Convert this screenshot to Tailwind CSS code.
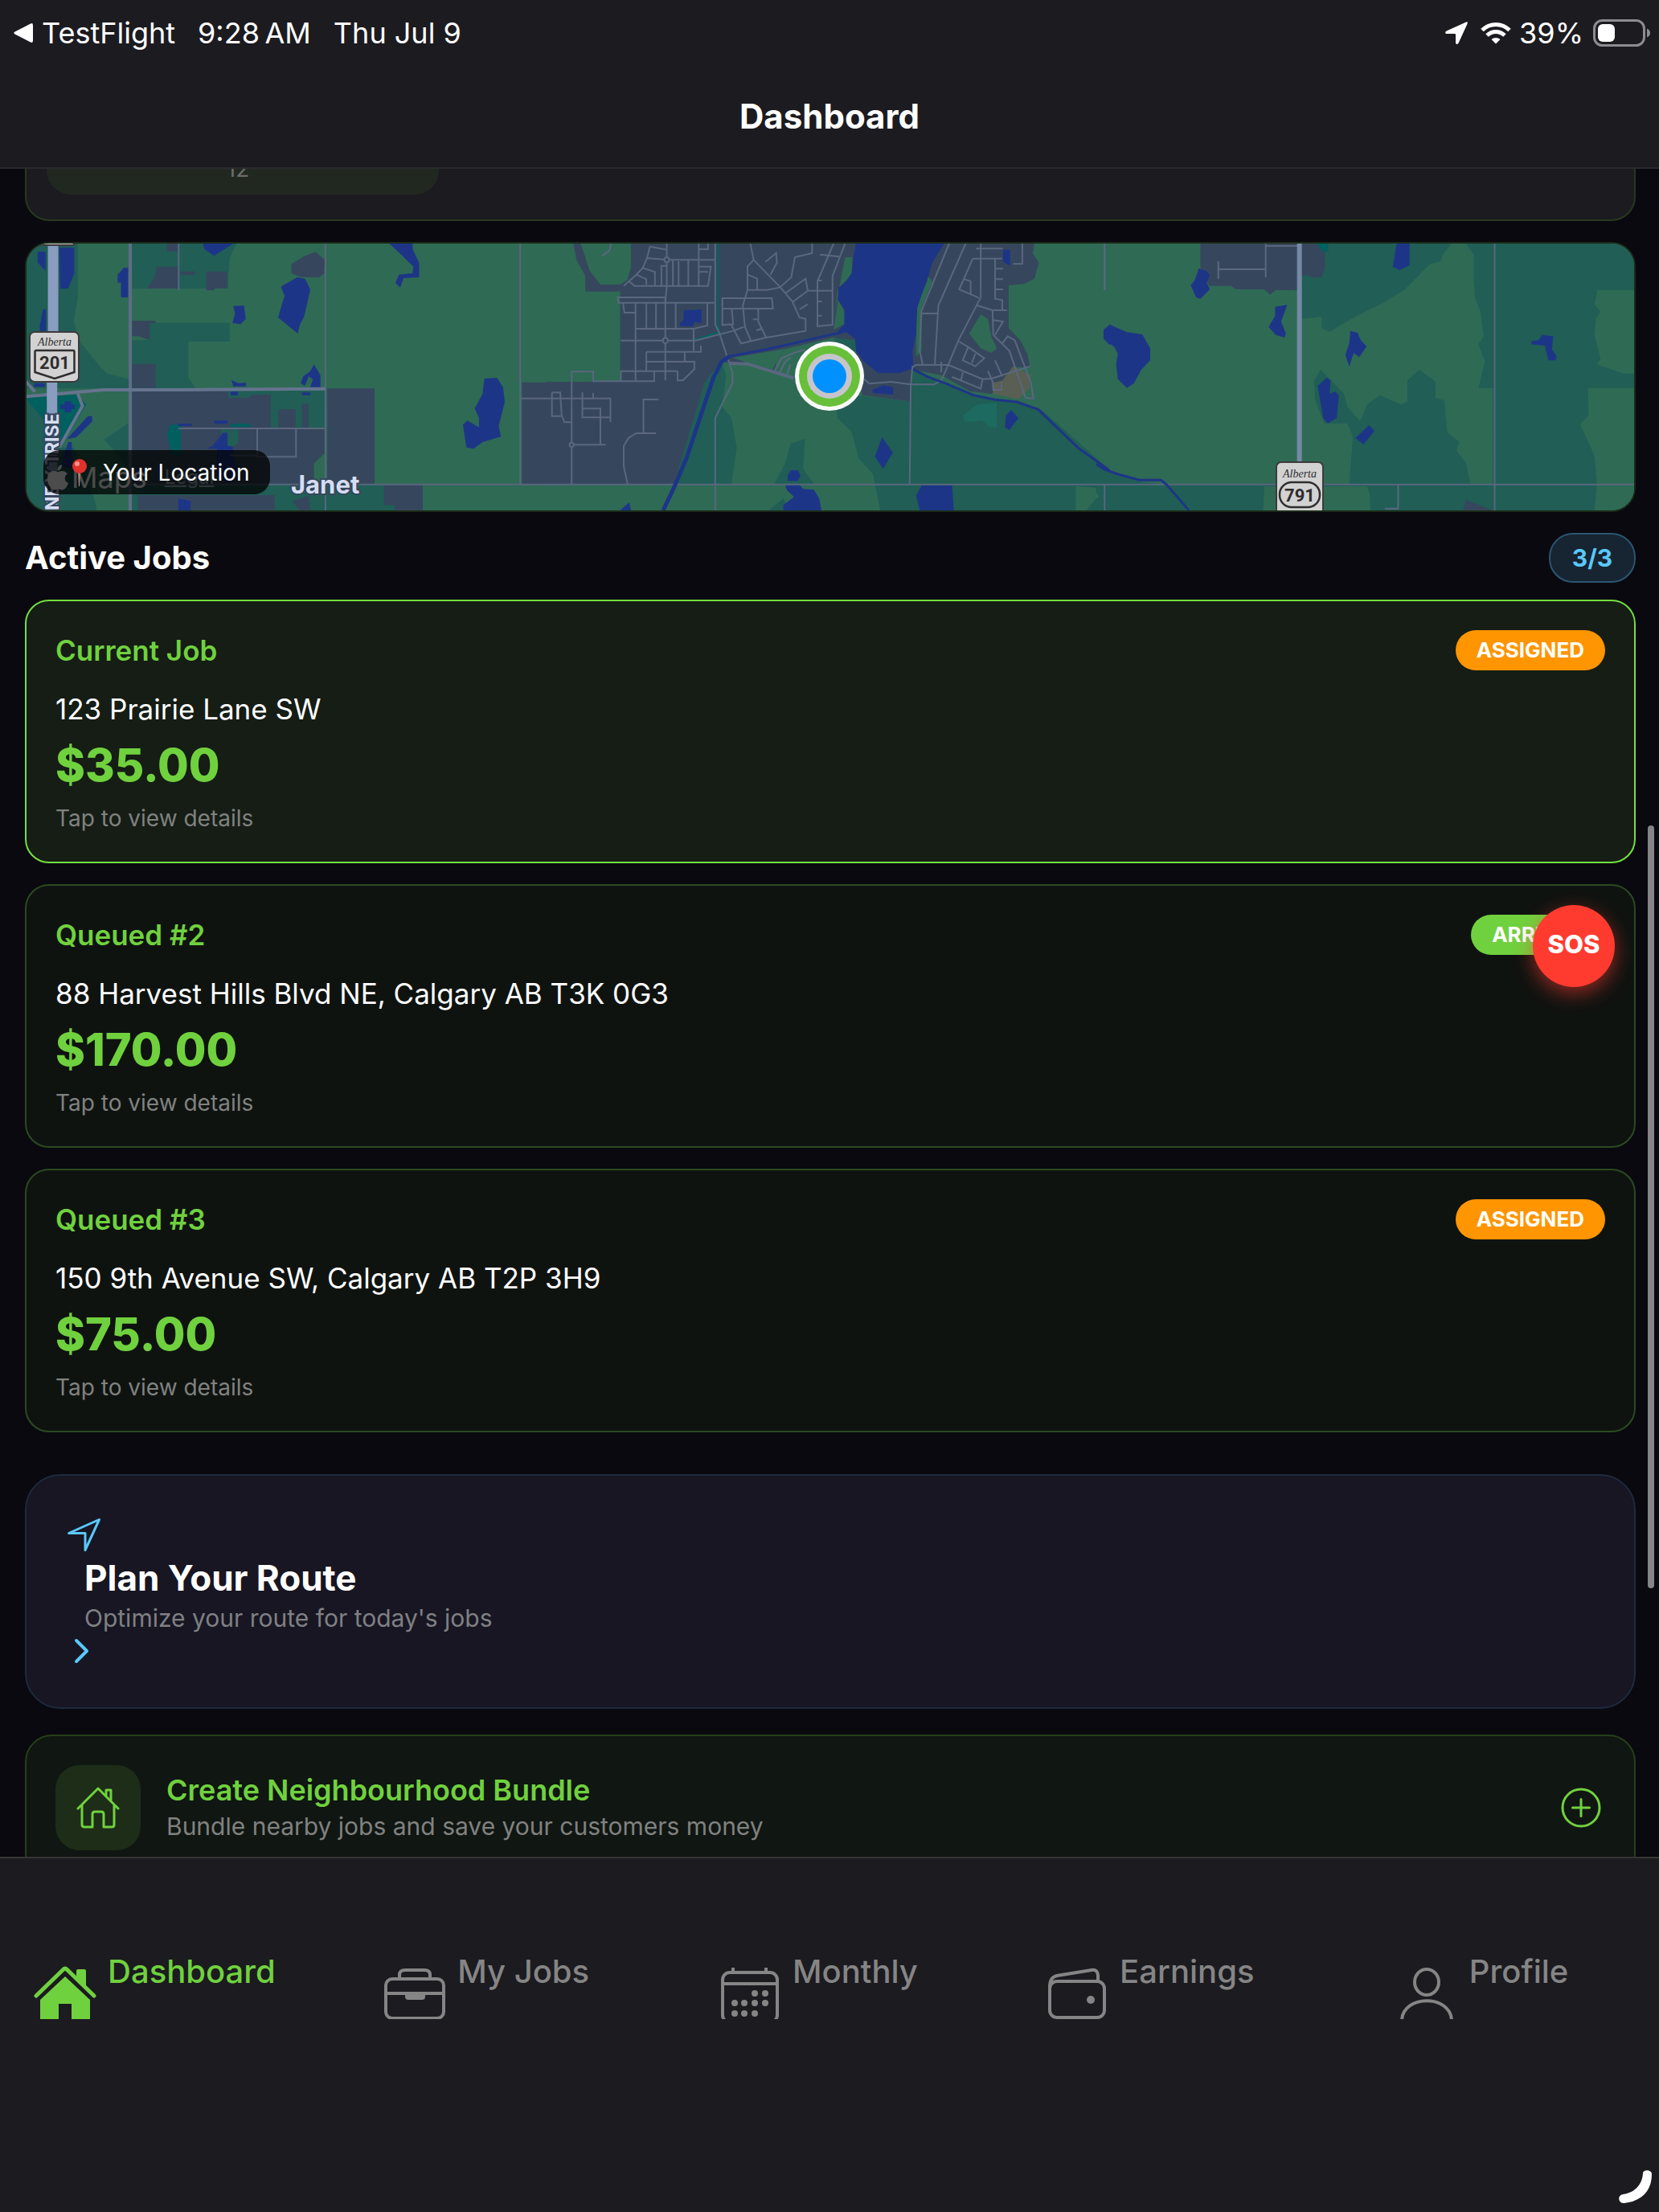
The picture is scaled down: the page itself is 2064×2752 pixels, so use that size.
<!DOCTYPE html>
<html lang="en">
<head>
  <meta charset="UTF-8"/>
  <meta name="viewport" content="width=device-width, initial-scale=1.0"/>
  <title>Dashboard</title>
  <script src="https://cdn.jsdelivr.net/npm/@tailwindcss/browser@4"></script>
</head>
<body class="bg-[#0a090f] text-white font-['Inter','Liberation_Sans',sans-serif]">
  <div class="relative flex flex-col h-screen overflow-hidden">

    <!-- Header -->
    <header class="shrink-0 bg-[#1c1b20] border-b-2 border-[#2b2a2f]">
      <div class="flex items-center justify-between h-[82px] pl-4 pr-[10px] text-[36px] leading-[44px]">
        <div class="flex items-center">
          <svg class="w-[26px] h-[26px] mr-[10px]" viewBox="0 0 26 26" fill="#fff"><path d="M2.500 11.500 22 1.500Q25 0 25 3.500V22.500Q25 26 22 24.500L2.500 14.500Q0 13 2.500 11.500Z"/></svg>
          <span class="mr-7">TestFlight</span>
          <span class="mr-7">9:28&#8201;AM</span>
          <span>Thu Jul 9</span>
        </div>
        <div class="flex items-center">
          <svg class="w-7 h-7 mr-4" viewBox="0 0 28 28" fill="#fff"><path d="M26 .4 1.600 11.400C-.6 12.600 0 15 2 15H12Q13 15 13 16V26C13 28.400 15.600 28.600 16.600 26.600L27.600 2.400C28.200 1 27.400 0 26 .4Z"/></svg>
          <svg class="w-[38px] h-[28px] mr-[10px]" viewBox="0 0 38 28" fill="none" stroke="#fff" stroke-width="5"><path d="M2 10.500C11.500 1 26.500 1 36 10.500"/><path d="M8 17C14.500 11 23.500 11 30 17"/><path d="M19 27.500 13.500 22C16.500 19.300 21.500 19.300 24.500 22Z" fill="#fff" stroke="none"/></svg>
          <span class="mr-3">39%</span>
          <svg class="w-[72px] h-[34px]" viewBox="0 0 72 34"><rect x="1.500" y="1.500" width="62" height="31" rx="10" fill="none" stroke="#8d8d90" stroke-width="3"/><rect x="6" y="6" width="21" height="22" rx="6" fill="#fff"/><path d="M67 11.500Q71 13 71 17T67 22.500Z" fill="#8d8d90"/></svg>
        </div>
      </div>
      <h1 class="h-[126px] text-center text-[42px] leading-[126px] font-bold">Dashboard</h1>
    </header>

    <!-- Scrolling content -->
    <main class="flex-1 min-h-0 overflow-hidden pl-[31px] pr-[29px]">

      <!-- Bottom of the stats card -->
      <section class="h-[65px] rounded-b-[30px] border-2 border-t-0 border-[#28381f] bg-[#1c1b20] px-[25px] overflow-hidden">
        <div class="w-[488px] h-8 rounded-b-[30px] bg-[#212820] text-center text-[28px] text-[#6c6c6c] leading-[0px] pr-3 overflow-hidden">
          <span>12</span>
        </div>
      </section>

      <!-- Map -->
      <section class="relative mt-[26px] h-[336px] rounded-[30px] border-2 border-[#1b2a17] bg-[#2f6a55] overflow-hidden">
        <svg class="block w-full h-full" viewBox="0 0 2000 332" preserveAspectRatio="xMidYMid slice">
          <rect width="2000" height="332" fill="#2f6a55"/>

          <!-- West -->
          <g transform="translate(-33 -13) scale(.4464 .3333)">
            <path fill="#205e56" d="M73 39H217V240L205 330 225 410 280 500 300 525 360 545V580H73ZM368 39H660L640 90 635 207H368ZM417 335H640V405H525V540L545 578H368V400H417ZM637 588H906V727H637ZM73 605H130V1035H73ZM165 800H205L230 880 265 1000 270 1035H165ZM290 770 357 710V880L330 830ZM368 938H1178V1035H368Z"/>
            <path fill="#36475d" d="M465 39h30v30h-30ZM437 125H498V207H410L430 165ZM502 143h42v14h-42ZM575 143H633V207H597V214H575ZM880 70 905 100 903 150 890 165H840L812 150V115L850 85ZM368 327H433V337H417V400L385 385H368ZM368 488h66v90h-66ZM368 588H637V615H690L705 603H755V727H906V820L875 860V925H906V938H368ZM912 580h132v358h-132ZM1070 940h108v95h-78V1015h-30ZM385 978h380v57h-380ZM776 657h48v70h-48ZM842 637h18v90h-18ZM815 1000 860 980 865 1035H835ZM1455 557H1572V938H1455Z"/>
            <path fill="#005f5f" d="M73 615 215 603 240 640 170 800 125 780V700L73 620ZM475 715H504V830H480L465 750ZM643 712h54v12h-54Z"/>
            <path fill="#205e56" d="M617 733h47v50l-20 20h-27Z"/>
            <path fill="#1d3587" d="M105 70h22v70l-22-30ZM165 55H207V150L190 207H168ZM345 130h12v110h-20v-55h-9v-30ZM120 285h8v80h-17v-20ZM565 39H650L597 85 570 60ZM828 165 850 170 865 210 848 310 835 345 830 375 775 315 785 270 793 235 783 200ZM650 272 680 270 685 320 670 340 648 335 655 300ZM1085 39H1150V60L1168 110V165L1125 168 1115 203 1102 185 1112 155 1150 150 1152 125 1110 70ZM875 490 893 530V575H865L872 545 860 535 850 570 838 560 845 535 865 515ZM645 548 665 560 685 558V572H650ZM643 592h20v14h-20ZM842 595h23v10h-23ZM1350 543 1385 540 1402 575 1407 630 1390 720 1396 760 1345 780 1320 805 1300 800 1290 715 1303 700 1335 725V690L1323 655 1345 600ZM180 628h18v12h10v16h-10v12h-18v-12h-12v-16h12ZM245 683h12v20l-45 60-25 5ZM497 712h38v8h-38ZM597 700h37v12h-37ZM622 745h12v50h14l15 125-30 10-28-30V805h-30l17-10ZM497 990 532 1000 530 1035H497ZM190 780h10v100l-30-10ZM95 560h30v14h-30Z"/>
            <path vector-effect="non-scaling-stroke" fill="none" stroke="#5a677f" stroke-width="2" d="M498 39V212M907 39V1035M1450 39V938M497 729H906M717 729V835H825V729M640 830H717M906 938H1572M368 938H906M1453 617H1535M1568 595H1540L1536 605V685H1568"/>
            <path vector-effect="non-scaling-stroke" fill="none" stroke="#5f6d87" stroke-width="4" d="M363 39V1035"/>
            <path vector-effect="non-scaling-stroke" fill="none" stroke="#66748f" stroke-width="4" d="M73 610 290 585H500L907 581M73 555 97 592M217 600 230 645 165 800"/>
            <path vector-effect="non-scaling-stroke" fill="none" stroke="#8a9cc0" stroke-width="13" d="M148 39V370L145 560V1035"/>
          </g>

          <!-- Town -->
          <g transform="translate(647 -13) scale(.4464 .3333)">
            <path fill="#205e56" d="M485 470 500 530 490 650 515 690 530 800 515 938H355L440 560ZM862 605 1010 628 1015 500 1100 560 1200 610 1320 630 1380 660 1570 885V1035H930L910 900 870 840 850 740 810 690V640ZM680 785 720 768 715 880 745 935H635L665 860ZM660 990 620 1035H680ZM805 375 860 370V500H790Z"/>
            <path fill="#36475d" d="M75 39H1360L1355 75 1372 110 1360 170 1330 190 1288 195V355L1320 400 1340 450 1348 500 1300 500 1270 560 1240 600 1180 590 1100 530 1020 510 1012 628 880 605 870 540 860 400 800 390 665 432 640 480 636 515 690 540H850L870 560 790 570 690 545 560 490 508 485 485 478 440 560 355 938H0V555H205V218H108V160L83 100Z"/>
            <path fill="#2f6a55" d="M95 39H235V130L225 175 205 192H150L120 140ZM1210 303 1230 320 1240 390 1255 430 1240 447 1210 430 1178 375ZM510 487 560 490 690 545 700 690 560 700 515 560ZM520 465 665 432 640 480 630 510 560 485ZM832 90h20v60l-40 60-15 120 15-100ZM812 250 830 290V340L800 360ZM1062 160 1075 180 1045 280V440L1030 460V290Z"/>
            <path fill="#595f52" d="M1300 497 1350 530 1345 580 1315 620 1245 600 1240 560 1270 550Z"/>
            <path fill="#1d6a60" d="M1160 680 1200 640 1255 632V725H1235L1215 700 1165 705Z"/>
            <path fill="#2f6a55" d="M1475 945 1530 950 1535 985 1505 1035H1475Z"/>
            <path fill="#1d3587" d="M862 39H1108L1075 110 1060 180 1045 230 1033 280 1030 380 1020 440 1022 505 985 523H925L885 480 862 440 860 395 835 370 800 383 830 340V285L813 250V205L835 180 850 150 855 90ZM382 288 432 285V335L412 332 408 348H372V335L382 325ZM1272 62h20v60l-20-15ZM908 585 940 568 966 575V603L910 597ZM1295 660 1315 690 1290 735 1278 725 1280 680ZM935 762 965 820 938 880 915 835ZM680 885h20l8 20-8 20h-28V905ZM665 940H705L715 955 745 958 760 990 766 1035H660V1015L690 985 670 960ZM1045 942H1130L1135 1035H1040L1030 980ZM205 1035 230 1005 236 1035ZM1570 340 1552 370 1560 405 1570 420Z"/>
            <path vector-effect="non-scaling-stroke" fill="none" stroke="#00675f" stroke-width="2" d="M478 39V340L482 370 410 400"/>
            <g fill="none" stroke="#5a677f" stroke-width="2">
              <path vector-effect="non-scaling-stroke" d="M335 39V197L331 260M280 93 335 100H470M288 50 335 62M288 50 280 93 268 130 250 155 215 197M268 130 302 145V197M250 155 278 172V193M230 180 245 197H450L458 125H424M424 39V197M395 100V197M368 105V197M352 100V197M335 122H320V197M424 60H450V39M424 145H450M470 39V340L482 375 518 520V560L470 690V1035"/>
              <path vector-effect="non-scaling-stroke" d="M198 240H331V260H200ZM200 260H468M213 262 217 297H248M248 262V550M278 262V355M305 262V355M331 262V550M360 262V355M248 357H410L448 345V262M410 357V440M207 401H415L520 365 550 350M278 443H430V420M278 443V515M278 480H412V508L380 550H365V515M385 443V480M207 550V515H365M70 938V517H130V553H300V515"/>
              <path vector-effect="non-scaling-stroke" d="M568 39 577 100 650 200 685 255 705 315 722 320V365L612 390 542 412 515 343M577 100 560 125V212L547 270 553 350 570 403M560 212H615L650 203 682 165 692 90 740 75V39M610 107 640 75 642 110 624 155M665 225 722 170 728 215H795M685 258 728 215M705 285 728 265M490 243H628L631 282H490ZM490 282V343L520 340 516 283M590 283V330L612 390M585 363 600 357M575 322H590M560 155 587 170V212M800 39 755 180V348L797 342V160L832 39M762 80 815 88M757 177H767M757 255H767M757 308H767"/>
              <path vector-effect="non-scaling-stroke" d="M1122 39 1045 290 1040 440 1048 490M1168 39 1092 270 1082 490M1045 300H1090M1210 39V240L1148 400 1120 490M1197 58H1272M1188 95H1270M1188 95 1150 210 1205 242M1165 172 1182 180V230M1250 95V245L1270 250V285M1200 270 1243 288H1283M1243 288 1245 380 1290 440 1335 615 1357 618 1350 560 1305 400 1285 385 1270 412M1245 325 1272 330 1250 380M1326 39V115H1300M1250 133H1272M1250 172H1272M1250 210H1272M1150 405 1175 425 1160 475 1195 497 1220 467 1175 425M1195 450 1185 485M1020 500 1030 492H1120L1215 545 1240 543 1348 497M1215 545 1210 580 1130 537M1160 520 1155 550M1250 475 1270 535M1230 515 1245 560V585H1268V555M1100 480V520M1120 490 1100 550 1080 565H1015L960 555 900 562 885 545M1020 495 1015 570 1012 940"/>
              <path vector-effect="non-scaling-stroke" d="M635 515 655 467 690 447 720 435M650 520 665 480 680 465M680 490 670 528M0 617H178V705M100 595V688H178M100 655H150V787M15 595H38L42 680 50 706H70M15 595V683H40M130 597V617M70 790H165M312 621H270V745M305 747H250L228 765 215 795V870L226 938M0 938H1570M1555 39V212M1555 938V1035M155 85 175 65 180 39"/>
            </g>
            <path vector-effect="non-scaling-stroke" fill="none" stroke="#5a677f" stroke-width="4" d="M508 486 560 488 690 542"/>
            <g fill="#36475d" stroke="#5a677f" stroke-width="2">
              <ellipse vector-effect="non-scaling-stroke" cx="335" cy="100" rx="7" ry="9"/>
              <ellipse vector-effect="non-scaling-stroke" cx="331" cy="401" rx="7" ry="10"/>
              <ellipse vector-effect="non-scaling-stroke" cx="70" cy="790" rx="6" ry="8"/>
            </g>
            <path vector-effect="non-scaling-stroke" fill="none" stroke="#1d3587" stroke-width="3" d="M805 375 700 408 610 435 510 460"/>
            <path vector-effect="non-scaling-stroke" fill="none" stroke="#1d3587" stroke-width="5" d="M510 460 488 480 465 540 430 680 390 840 355 950 325 1035"/>
            <path vector-effect="non-scaling-stroke" fill="none" stroke="#1d3587" stroke-width="3" d="M1022 508 1060 535 1110 560 1190 605 1250 622 1310 630 1370 658 1480 800 1568 885"/>
          </g>

          <!-- East -->
          <g transform="translate(1331 -13) scale(.4464 .3333)">
            <path fill="#205e56" d="M573 39H990L965 80 960 105 930 115 860 210 800 260 730 305 650 368 628 355V312L573 320ZM1030 39H1500V1035H0V868L60 905 130 930 195 938H705L715 760 700 710H635L610 620 607 550 625 510 690 600 700 650 735 703 755 640 790 605 850 640 867 630V550L900 510 945 555V615L970 625 978 745 1012 780 1003 810 1030 860 1042 935H1105V578H1065L1083 480 1065 415 1080 385 1070 290 1055 240 1052 180V80Z"/>
            <path fill="#2f6a55" d="M1397 213H1500V525H1470L1395 490 1405 470 1388 380 1392 320 1405 293 1388 265ZM1370 578H1500V1035H1388L1395 938 1388 830 1368 770 1348 715 1372 680ZM468 945H755L763 980V1035H465ZM0 970 8 985 0 992Z"/>
            <path fill="#36475d" d="M290 39H637V130L628 165H600L590 158H573L558 213H500L484 230 468 210H390L375 197H315L290 130ZM1030 995 1105 1035H1022Z"/>
            <path fill="#005f5f" d="M613 39H646V70H632Z"/>
            <path fill="#1d3587" d="M38 342 85 370 128 378 150 430V475L125 510 105 560 85 578 60 545 55 490 60 450 50 425 20 395V360ZM285 132 305 140 316 155 308 185 316 210 290 245 278 240 263 195 275 175ZM498 275 532 268 515 330 528 375 525 390 500 380 480 350 498 310ZM837 39H873V120L845 138 826 125ZM708 365 728 372 737 400 753 423 733 463 717 448 705 498 694 455 705 410ZM642 540 653 550 650 600 665 592 676 605 670 690 645 710 632 690 617 570ZM760 717 775 738 745 788 722 765ZM1243 380 1273 385 1270 435 1283 460 1280 475H1260L1250 420 1213 415V403L1232 400Z"/>
            <path vector-effect="non-scaling-stroke" fill="none" stroke="#5a677f" stroke-width="2" d="M23 39V212M23 938V1035M340 105V172M340 135H472M472 39V165M472 48H560M0 938H1500M1110 39V1035M841 938V1028H804"/>
            <path vector-effect="non-scaling-stroke" fill="none" stroke="#7589a6" stroke-width="6" d="M566 39V1035"/>
            <path vector-effect="non-scaling-stroke" fill="none" stroke="#1d3587" stroke-width="3" d="M0 862 20 880 60 900 120 922H180L195 938 258 1035"/>
          </g>

          <!-- Road and place labels -->
          <g font-family="Inter, sans-serif" font-weight="700" fill="#d5def0" stroke="#36475d" stroke-width="4" paint-order="stroke">
            <text x="329" y="311" font-size="31">Janet</text>
            <text transform="translate(40 332) rotate(-90)" font-size="23">NE</text>
            <text transform="translate(40 298) rotate(-90)" font-size="23">Y T</text>
            <text transform="translate(40 262) rotate(-90)" font-size="23">RISE</text>
          </g>

          <!-- Highway shields -->
          <g>
            <path fill="#d2d2d2" stroke="#3d3a3c" stroke-width="2" d="M14 -10H56Q60 -10 60 -4V-2Q60 2 56 2H10Z"/>
            <rect x="4" y="110" width="61" height="62" rx="6" fill="#d2d2d2" stroke="#3d3a3c" stroke-width="2"/>
            <path fill="none" stroke="#2f2d2e" stroke-width="2.500" d="M12 133H58Q59.500 133 59.500 135V160L35 168 10.500 160V135Q10.500 133 12 133Z"/>
            <text x="35" y="127" text-anchor="middle" font-family="Liberation Serif, serif" font-style="italic" font-size="14" fill="#2f2d2e">Alberta</text>
            <text x="35" y="156" text-anchor="middle" font-family="Roboto, sans-serif" font-weight="700" font-size="22" fill="#2f2d2e">201</text>
            <rect x="1555" y="272" width="58" height="68" rx="6" fill="#d2d2d2" stroke="#3d3a3c" stroke-width="2"/>
            <rect x="1559" y="297" width="50" height="31" rx="15" fill="none" stroke="#2f2d2e" stroke-width="2.500"/>
            <text x="1584" y="291" text-anchor="middle" font-family="Liberation Serif, serif" font-style="italic" font-size="14" fill="#2f2d2e">Alberta</text>
            <text x="1584" y="321" text-anchor="middle" font-family="Roboto, sans-serif" font-weight="700" font-size="22" fill="#2f2d2e">791</text>
          </g>

          <!-- Current position -->
          <g>
            <circle cx="999" cy="165" r="43" fill="#fafafa"/>
            <circle cx="999" cy="165" r="38" fill="#68c03a"/>
            <circle cx="999" cy="165" r="28" fill="#c6c5cc"/>
            <circle cx="999" cy="165" r="21" fill="#0091ff"/>
          </g>
        </svg>

        <div class="absolute left-[21px] bottom-[20px] flex items-center w-[282px] h-[55px] rounded-[20px] bg-black/75 overflow-hidden">
          <div class="absolute left-[5px] top-[14px] flex items-center text-[#4c4c4c] text-[36px] leading-[40px]">
            <svg class="w-[26px] h-[32px] mr-[4px]" viewBox="0 0 26 32" fill="#4c4c4c"><path d="M18 0C18.500 4 15.500 7.500 12.500 7.500 12 4 15 .8 18 0ZM25 11.500C20 14.500 21 21 26 23 24.500 27.500 21.500 31.500 18.500 31.500 16.500 31.500 15.800 30.400 13.500 30.400S10.300 31.500 8.500 31.500C4.500 31.500 0 24 0 18 0 8 8 6.500 13 9.500 17 7 22 7.500 25 11.500Z"/></svg>
            <span>Maps</span>
            <a href="#" class="ml-[22px] text-[24px] leading-[30px] underline text-[#2e3436]">Legal</a>
          </div>
          <svg class="relative w-[20px] h-[34px] ml-[35px]" viewBox="0 0 20 34"><path d="M8 14h3l-1 20h-1Z" fill="#a98b84"/><circle cx="10" cy="9" r="9" fill="#e0312c"/><circle cx="7" cy="6" r="3" fill="#ff8f88"/></svg>
          <span class="relative ml-[19px] text-[28px] leading-[36px]">Your Location</span>
        </div>
      </section>

      <!-- Active jobs -->
      <div class="flex items-center justify-between h-[64px] mt-[25px] mb-5">
        <h2 class="text-[40px] leading-[50px] font-bold">Active Jobs</h2>
        <span class="flex items-center justify-center w-[108px] h-[62px] rounded-[30px] border-2 border-[#2a5670] bg-[#172431] text-[#5ac8fa] text-[30px] font-bold">3/3</span>
      </div>

      <div class="flex flex-col gap-[26px]">
        <a href="#" class="block p-9 rounded-[30px] border-2 border-[#73e040] bg-[#151d15]">
          <div class="flex items-center justify-between h-[50px]">
            <h3 class="text-[35px] leading-[44px] font-semibold text-[#70d13e]">Current Job</h3>
            <span class="px-[26px] rounded-[26px] bg-[#ff9500] text-[26px] leading-[50px] font-bold">ASSIGNED</span>
          </div>
          <p class="mt-[26px] text-[35px] leading-[44px]">123 Prairie Lane SW</p>
          <p class="mt-[14px] text-[56px] leading-[68px] font-extrabold text-[#70d13e]">$35.00</p>
          <p class="mt-[14px] text-[28px] leading-[36px] text-[#808280]">Tap to view details</p>
        </a>
        <a href="#" class="block p-9 rounded-[30px] border-2 border-[#2b4a20] bg-[#0f1310]">
          <div class="flex items-center justify-between h-[50px]">
            <h3 class="text-[35px] leading-[44px] font-semibold text-[#70d13e]">Queued #2</h3>
            <span class="px-[26px] rounded-[26px] bg-[#70d13e] text-[26px] leading-[50px] font-bold">ARRIVED</span>
          </div>
          <p class="mt-[26px] text-[35px] leading-[44px]">88 Harvest Hills Blvd NE, Calgary AB T3K 0G3</p>
          <p class="mt-[14px] text-[56px] leading-[68px] font-extrabold text-[#70d13e]">$170.00</p>
          <p class="mt-[14px] text-[28px] leading-[36px] text-[#808280]">Tap to view details</p>
        </a>
        <a href="#" class="block p-9 rounded-[30px] border-2 border-[#2b4a20] bg-[#0f1310]">
          <div class="flex items-center justify-between h-[50px]">
            <h3 class="text-[35px] leading-[44px] font-semibold text-[#70d13e]">Queued #3</h3>
            <span class="px-[26px] rounded-[26px] bg-[#ff9500] text-[26px] leading-[50px] font-bold">ASSIGNED</span>
          </div>
          <p class="mt-[26px] text-[35px] leading-[44px]">150 9th Avenue SW, Calgary AB T2P 3H9</p>
          <p class="mt-[14px] text-[56px] leading-[68px] font-extrabold text-[#70d13e]">$75.00</p>
          <p class="mt-[14px] text-[28px] leading-[36px] text-[#808280]">Tap to view details</p>
        </a>
      </div>

      <!-- Plan route -->
      <a href="#" class="block mt-[52px] px-12 pt-12 pb-[50px] rounded-[44px] border-2 border-[#1e2a3e] bg-[#171622]">
        <svg class="w-[50px] h-[50px]" viewBox="0 0 50 50" fill="none" stroke="#5ac8fa" stroke-width="3" stroke-linejoin="round"><path d="M42.500 6.500 4.500 23.500H25V44.500Z"/></svg>
        <h3 class="pl-6 text-[44px] leading-[58px] font-bold">Plan Your Route</h3>
        <p class="pl-6 text-[30px] leading-[42px] text-[#808084]">Optimize your route for today's jobs</p>
        <svg class="w-10 h-10" viewBox="0 0 40 40" fill="none" stroke="#5ac8fa" stroke-width="4" stroke-linecap="round" stroke-linejoin="round"><path d="M14 7 27 20 14 33"/></svg>
      </a>

      <!-- Neighbourhood bundle -->
      <a href="#" class="flex items-center mt-8 p-9 rounded-[34px] border-2 border-[#264018] bg-[#101612]">
        <span class="flex items-center justify-center w-[106px] h-[106px] rounded-[30px] bg-[#1d2d18]">
          <svg class="w-[54px] h-[54px]" viewBox="0 0 54 54" fill="none" stroke="#70d13e" stroke-width="3" stroke-linecap="round" stroke-linejoin="round"><path d="M2 28 27 3 52 28M7 23V48Q7 51 10 51H20V35Q20 32 23 32H31Q34 32 34 35V51H44Q47 51 47 48V23M37 12V5H43V19"/></svg>
        </span>
        <span class="flex-1 ml-[32px]">
          <span class="block text-[36px] leading-[46px] font-semibold text-[#70d13e]">Create Neighbourhood Bundle</span>
          <span class="block text-[30px] leading-[44px] text-[#808280]">Bundle nearby jobs and save your customers money</span>
        </span>
        <svg class="w-[60px] h-[60px]" viewBox="0 0 60 60" fill="none" stroke="#70d13e" stroke-width="3" stroke-linecap="round"><circle cx="30" cy="30" r="23"/><path d="M30 19.500V40.500M19.500 30H40.500"/></svg>
      </a>
    </main>

    <!-- Tab bar -->
    <nav class="shrink-0 flex h-[442px] pt-[116px] border-t-2 border-[#363636] bg-[#1c1b20] text-[40px] leading-[50px] font-medium text-[#858585]">
      <a href="#" class="flex-1 flex items-start justify-center pr-7 text-[#70d13e]">
        <svg class="w-[78px] h-[66px] mt-[18px] mr-[14px]" viewBox="0 0 78 66"><path fill="#70d13e" d="M39 13 70 42V66H47V47H31V66H8V42Z"/><path d="M3 37 36 4Q39 1 42 4L75 37" fill="none" stroke="#1c1b20" stroke-width="10"/><path fill="#70d13e" d="M53 15V6Q53 4 55 4H63Q65 4 65 6V27Z"/><path d="M3 37 36.500 4.500Q39 2 41.500 4.500L75 37" fill="none" stroke="#70d13e" stroke-width="5" stroke-linecap="round"/></svg>
        <span>Dashboard</span>
      </a>
      <a href="#" class="flex-1 flex items-start justify-center pr-7">
        <svg class="w-[78px] h-[66px] mt-[18px] mr-[14px]" viewBox="0 0 78 66" fill="none" stroke="#858585" stroke-width="4"><rect x="3" y="16" width="72" height="49" rx="8"/><path d="M20 15V11Q20 5 27 5H51Q58 5 58 11V15M3 34H75"/><path d="M27 35H52V38Q52 42 48 42H31Q27 42 27 38Z" fill="#858585" stroke="none"/></svg>
        <span>My Jobs</span>
      </a>
      <a href="#" class="flex-1 flex items-start justify-center pr-7">
        <svg class="w-[78px] h-[66px] mt-[18px] mr-[14px]" viewBox="0 0 78 66" fill="none" stroke="#858585" stroke-width="4"><rect x="5" y="8" width="68" height="62" rx="9"/><path d="M5 22H73M18 2V8M59 2V8"/><g fill="#858585" stroke="none"><circle cx="45" cy="34" r="4"/><circle cx="58" cy="34" r="4"/><circle cx="20" cy="46" r="4"/><circle cx="32" cy="46" r="4"/><circle cx="45" cy="46" r="4"/><circle cx="58" cy="46" r="4"/><circle cx="20" cy="59" r="4"/><circle cx="32" cy="59" r="4"/><circle cx="45" cy="59" r="4"/></g></svg>
        <span>Monthly</span>
      </a>
      <a href="#" class="flex-1 flex items-start justify-center pr-7">
        <svg class="w-[78px] h-[66px] mt-[18px] mr-[14px]" viewBox="0 0 78 66" fill="none" stroke="#858585" stroke-width="4"><rect x="5" y="19" width="68" height="45" rx="9"/><path d="M5 26Q5 14 14 12L57 5Q64 4 65 11V19"/><circle cx="56" cy="42" r="5" fill="#858585" stroke="none"/></svg>
        <span>Earnings</span>
      </a>
      <a href="#" class="flex-1 flex items-start justify-center pr-7">
        <svg class="w-[78px] h-[66px] mt-[18px] mr-[14px]" viewBox="0 0 78 66" fill="none" stroke="#858585" stroke-width="4"><ellipse cx="39" cy="20" rx="15" ry="16"/><path d="M8 68C9 35 69 35 70 68"/></svg>
        <span>Profile</span>
      </a>
    </nav>

    <!-- Floating SOS button -->
    <button type="button" class="absolute right-[55px] top-[1126px] w-[102px] h-[102px] pb-1 rounded-full bg-[#ff3b30] text-[31px] leading-[36px] font-extrabold shadow-[0_8px_24px_rgba(255,59,48,0.55)]">SOS</button>

    <!-- Scroll indicator -->
    <div class="absolute right-[6px] top-[1027px] w-2 h-[949px] rounded-full bg-[#858588]"></div>

    <!-- Corner handle -->
    <svg class="absolute right-[6px] bottom-[6px] w-[48px] h-[48px]" viewBox="0 0 48 48" fill="#fff"><path d="M34 6C34 1 45 1 45 7 45 28 32 41 10 43 3 43 2 33 9 32 24 30 33 20 34 6Z"/></svg>
  </div>
</body>
</html>
